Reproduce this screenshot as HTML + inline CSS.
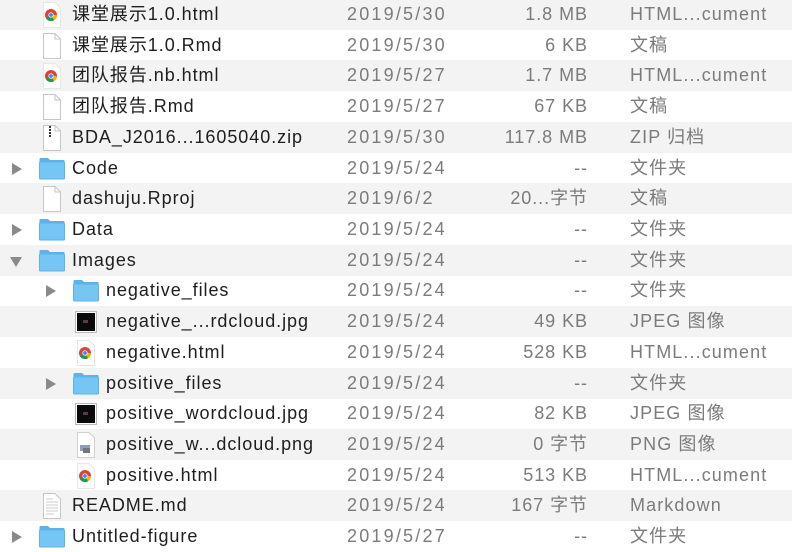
<!DOCTYPE html>
<html><head><meta charset="utf-8">
<style>
body{margin:0;width:792px;height:548px;overflow:hidden;background:#fff;font-family:"Helvetica Neue","Liberation Sans","Noto Sans CJK SC",sans-serif;font-size:18px;}
.r{position:absolute;left:0;width:792px;height:31px;}
.g{background:#f3f3f3;}
.r span{position:absolute;top:4px;line-height:22px;white-space:nowrap;letter-spacing:0.95px}
.n{color:#1e1e1e}
.r span.d{left:347px;color:#7b7b7b;letter-spacing:2.2px}
.s{right:204px;color:#7b7b7b;text-align:right}
.r span.k{left:630px;color:#7b7b7b;letter-spacing:1.1px}
.r svg{position:absolute;top:3px}
.t{position:absolute;top:10px;width:0;height:0}
.tr{border-top:6px solid transparent;border-bottom:6px solid transparent;border-left:10px solid #8a8a8a}
.td{border-left:6px solid transparent;border-right:6px solid transparent;border-top:10px solid #8a8a8a;top:12px}
</style></head><body>
<svg width="0" height="0" style="position:absolute">
<defs>
<symbol id="doc" viewBox="0 0 24 26"><path d="M3.5 0.5H15L20.5 6V25.5H3.5Z" fill="#fff" stroke="#c6c6c6"/><path d="M15 0.5V6H20.5" fill="none" stroke="#c6c6c6"/></symbol>
<symbol id="html" viewBox="0 0 24 26"><path d="M3.5 0.5H15L20.5 6V25.5H3.5Z" fill="#fff" stroke="#e6e6e6"/><circle cx="11" cy="13" r="6" fill="#db4437"/><path d="M11 13L5.8 16A6 6 0 0 0 14 18.2Z" fill="#0f9d58"/><path d="M11 13L14 18.2A6 6 0 0 0 17 13Z" fill="#f4b400"/><circle cx="11" cy="13" r="2.6" fill="#fff"/><circle cx="11" cy="13" r="1.9" fill="#4285f4"/></symbol>
<symbol id="zip" viewBox="0 0 24 26"><path d="M3.5 0.5H15L20.5 6V25.5H3.5Z" fill="#fff" stroke="#c6c6c6"/><path d="M15 0.5V6H20.5" fill="none" stroke="#c6c6c6"/><path d="M10 1V13" stroke="#333" stroke-width="2" stroke-dasharray="2 1"/></symbol>
<symbol id="md" viewBox="0 0 24 26"><path d="M3.5 0.5H15L20.5 6V25.5H3.5Z" fill="#fff" stroke="#c6c6c6"/><path d="M6 6H13M6 9H18M6 12H18M6 15H18M6 18H18M6 21H14" stroke="#ccc"/></symbol>
<symbol id="png" viewBox="0 0 24 26"><path d="M3.5 0.5H15L20.5 6V25.5H3.5Z" fill="#fff" stroke="#d0d0d0"/><rect x="6" y="13" width="10" height="6" fill="#8aa0c0"/><rect x="9" y="16" width="7" height="5" fill="#777"/></symbol>
<symbol id="jpg" viewBox="0 0 24 26"><rect x="1.5" y="2.5" width="21" height="21" fill="#fff" stroke="#bbb"/><rect x="3" y="4" width="18" height="18" fill="#0a0a0a"/><rect x="9" y="11" width="5" height="3" fill="#5a3a4a"/></symbol>
<symbol id="fold" viewBox="0 0 26 24"><path d="M0.5 4V2Q0.5 1 1.5 1H9L11 3H25Q25.5 3 25.5 4V5H0.5Z" fill="#5fb2e8"/><rect x="0.5" y="5" width="25" height="17" rx="1" fill="#76c6f5" stroke="#5fb2e8"/></symbol>
</defs></svg>

<div class="r g" style="top:-1px"><svg width="24" height="26" style="left:40px"><use href="#html"/></svg><span class="n" style="left:72px">课堂展示1.0.html</span><span class="d">2019/5/30</span><span class="s">1.8 MB</span><span class="k">HTML...cument</span></div>
<div class="r" style="top:30px"><svg width="24" height="26" style="left:40px"><use href="#doc"/></svg><span class="n" style="left:72px">课堂展示1.0.Rmd</span><span class="d">2019/5/30</span><span class="s">6 KB</span><span class="k">文稿</span></div>
<div class="r g" style="top:60px"><svg width="24" height="26" style="left:40px"><use href="#html"/></svg><span class="n" style="left:72px">团队报告.nb.html</span><span class="d">2019/5/27</span><span class="s">1.7 MB</span><span class="k">HTML...cument</span></div>
<div class="r" style="top:91px"><svg width="24" height="26" style="left:40px"><use href="#doc"/></svg><span class="n" style="left:72px">团队报告.Rmd</span><span class="d">2019/5/27</span><span class="s">67 KB</span><span class="k">文稿</span></div>
<div class="r g" style="top:122px"><svg width="24" height="26" style="left:40px"><use href="#zip"/></svg><span class="n" style="left:72px">BDA_J2016...1605040.zip</span><span class="d">2019/5/30</span><span class="s">117.8 MB</span><span class="k">ZIP 归档</span></div>
<div class="r" style="top:153px"><div class="t tr" style="left:12px"></div><svg width="26" height="24" style="left:39px;top:4px"><use href="#fold"/></svg><span class="n" style="left:72px">Code</span><span class="d">2019/5/24</span><span class="s">--</span><span class="k">文件夹</span></div>
<div class="r g" style="top:183px"><svg width="24" height="26" style="left:40px"><use href="#doc"/></svg><span class="n" style="left:72px">dashuju.Rproj</span><span class="d">2019/6/2</span><span class="s">20...字节</span><span class="k">文稿</span></div>
<div class="r" style="top:214px"><div class="t tr" style="left:12px"></div><svg width="26" height="24" style="left:39px;top:4px"><use href="#fold"/></svg><span class="n" style="left:72px">Data</span><span class="d">2019/5/24</span><span class="s">--</span><span class="k">文件夹</span></div>
<div class="r g" style="top:245px"><div class="t td" style="left:10px"></div><svg width="26" height="24" style="left:39px;top:4px"><use href="#fold"/></svg><span class="n" style="left:72px">Images</span><span class="d">2019/5/24</span><span class="s">--</span><span class="k">文件夹</span></div>
<div class="r" style="top:275px"><div class="t tr" style="left:46px"></div><svg width="26" height="24" style="left:73px;top:4px"><use href="#fold"/></svg><span class="n" style="left:106px">negative_files</span><span class="d">2019/5/24</span><span class="s">--</span><span class="k">文件夹</span></div>
<div class="r g" style="top:306px"><svg width="24" height="26" style="left:74px"><use href="#jpg"/></svg><span class="n" style="left:106px">negative_...rdcloud.jpg</span><span class="d">2019/5/24</span><span class="s">49 KB</span><span class="k">JPEG 图像</span></div>
<div class="r" style="top:337px"><svg width="24" height="26" style="left:74px"><use href="#html"/></svg><span class="n" style="left:106px">negative.html</span><span class="d">2019/5/24</span><span class="s">528 KB</span><span class="k">HTML...cument</span></div>
<div class="r g" style="top:368px"><div class="t tr" style="left:46px"></div><svg width="26" height="24" style="left:73px;top:4px"><use href="#fold"/></svg><span class="n" style="left:106px">positive_files</span><span class="d">2019/5/24</span><span class="s">--</span><span class="k">文件夹</span></div>
<div class="r" style="top:398px"><svg width="24" height="26" style="left:74px"><use href="#jpg"/></svg><span class="n" style="left:106px">positive_wordcloud.jpg</span><span class="d">2019/5/24</span><span class="s">82 KB</span><span class="k">JPEG 图像</span></div>
<div class="r g" style="top:429px"><svg width="24" height="26" style="left:74px"><use href="#png"/></svg><span class="n" style="left:106px">positive_w...dcloud.png</span><span class="d">2019/5/24</span><span class="s">0 字节</span><span class="k">PNG 图像</span></div>
<div class="r" style="top:460px"><svg width="24" height="26" style="left:74px"><use href="#html"/></svg><span class="n" style="left:106px">positive.html</span><span class="d">2019/5/24</span><span class="s">513 KB</span><span class="k">HTML...cument</span></div>
<div class="r g" style="top:490px"><svg width="24" height="26" style="left:40px"><use href="#md"/></svg><span class="n" style="left:72px">README.md</span><span class="d">2019/5/24</span><span class="s">167 字节</span><span class="k">Markdown</span></div>
<div class="r" style="top:521px"><div class="t tr" style="left:12px"></div><svg width="26" height="24" style="left:39px;top:4px"><use href="#fold"/></svg><span class="n" style="left:72px">Untitled-figure</span><span class="d">2019/5/27</span><span class="s">--</span><span class="k">文件夹</span></div>
</body></html>
